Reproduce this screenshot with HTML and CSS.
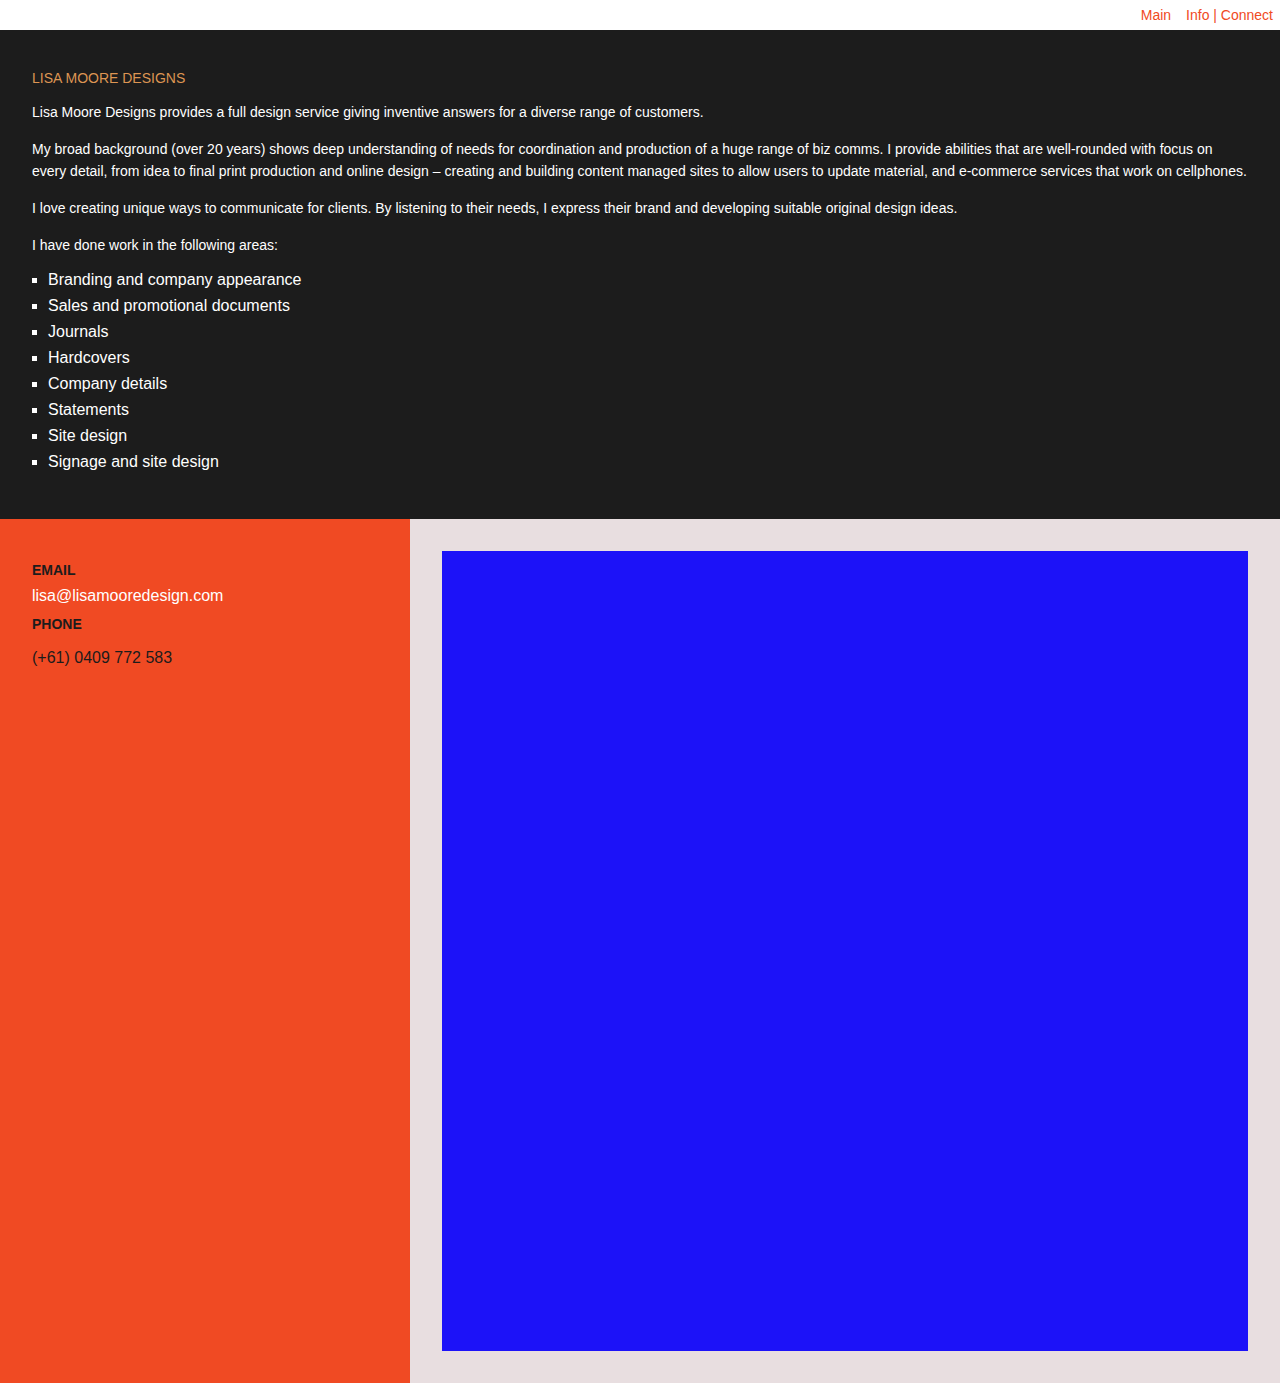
FILE: index.html
```html
<!DOCTYPE html>
<html lang="en">
<head>
<meta charset="utf-8">
<title>Lisa Moore Designs</title>
<link rel="stylesheet" href="styles.css">
</head>
<body>
<header class="topbar">
  <nav class="nav">
    <a href="#" class="nav-link">Main</a>
    <a href="#" class="nav-link">Info | Connect</a>
  </nav>
</header>
<section class="about">
  <h1 class="brand">LISA MOORE DESIGNS</h1>
  <p class="para">Lisa Moore Designs provides a full design service giving inventive answers for a diverse range of customers.</p>
  <p class="para">My broad background (over 20 years) shows deep understanding of needs for coordination and production of a huge range of biz comms. I provide abilities that are well-rounded with focus on every detail, from idea to final print production and online design – creating and building content managed sites to allow users to update material, and e-commerce services that work on cellphones.</p>
  <p class="para">I love creating unique ways to communicate for clients. By listening to their needs, I express their brand and developing suitable original design ideas.</p>
  <p class="para para-last">I have done work in the following areas:</p>
  <ul class="areas">
    <li>Branding and company appearance</li>
    <li>Sales and promotional documents</li>
    <li>Journals</li>
    <li>Hardcovers</li>
    <li>Company details</li>
    <li>Statements</li>
    <li>Site design</li>
    <li>Signage and site design</li>
  </ul>
</section>
<section class="contact">
  <div class="contact-info">
    <div class="label">EMAIL</div>
    <a href="#" class="email">lisa@lisamooredesign.com</a>
    <div class="label label-phone">PHONE</div>
    <div class="phone">(+61) 0409 772 583</div>
  </div>
  <div class="contact-media">
    <div class="media-box"></div>
  </div>
</section>
</body>
</html>
```
FILE: styles.css
```css
* { box-sizing: border-box; }
html, body { margin: 0; padding: 0; }
body {
  font-family: "Liberation Sans", Arial, sans-serif;
  background: #ffffff;
}
.topbar {
  height: 30px;
  background: #ffffff;
  display: flex;
  justify-content: flex-end;
  align-items: center;
  padding-right: 7px;
}
.nav {
  display: flex;
  gap: 15px;
}
.nav-link {
  color: #f04a23;
  font-size: 14px;
  text-decoration: none;
  line-height: 30px;
}
.about {
  background: #1c1c1c;
  padding: 37px 32px 44px;
  color: #ffffff;
}
.brand {
  margin: 0 0 12px;
  font-size: 14px;
  font-weight: normal;
  line-height: 22px;
  color: #dd9553;
}
.para {
  margin: 0 0 15px;
  font-size: 14px;
  line-height: 22px;
}
.para-last { margin-bottom: 11px; }
.areas {
  margin: 0;
  padding: 0 0 0 16px;
  list-style: square;
  font-size: 16px;
  line-height: 26px;
}
.contact {
  display: flex;
  height: 864px;
}
.contact-info {
  width: 410px;
  flex: none;
  background: #f04a23;
  padding: 42px 32px;
}
.label {
  font-size: 14px;
  font-weight: bold;
  line-height: 18px;
  color: #1c1c1c;
}
.email {
  display: block;
  color: #ffffff;
  text-decoration: none;
  font-size: 16px;
  line-height: 24px;
  margin-top: 5px;
}
.label-phone { margin-top: 7px; }
.phone {
  margin-top: 15px;
  font-size: 16px;
  line-height: 20px;
  color: #1c1c1c;
}
.contact-media {
  flex: 1;
  background: #e8dee0;
  padding: 32px;
}
.media-box {
  width: 806px;
  height: 800px;
  background: #1c12f8;
}
```
